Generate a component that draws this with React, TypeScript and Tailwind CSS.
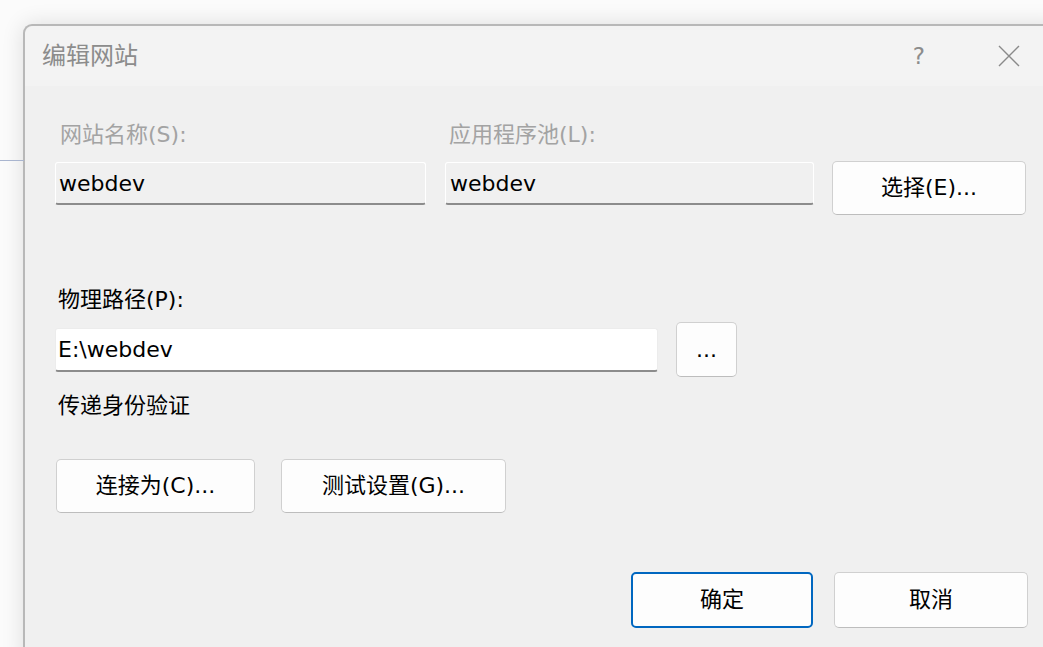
import React from "react";

const font = { fontFamily: '"DejaVu Sans", "Noto Sans CJK SC", sans-serif' };

const Btn = ({ label, w, h, primary = false }: { label: string; w: string; h: string; primary?: boolean }) => (
  <button
    className={
      "flex items-center justify-center rounded-[5px] bg-[#fdfdfd] text-[22px] leading-none text-black " +
      w + " " + h + " " +
      (primary ? "border-2 border-[#0067c0]" : "border border-[#d0d0d0] border-b-[#bdbdbd]")
    }
  >
    {label}
  </button>
);

export default function App() {
  return (
    <div className="relative h-[647px] w-[1043px] overflow-hidden bg-[#fbfbfb]" style={font}>
      {/* bit of the window behind the dialog */}
      <div className="absolute left-0 top-[160px] h-[1px] w-[24px] bg-[#a9b5cf]" />
      <div className="ml-[23px] mt-[24px] h-[640px] w-[1040px] rounded-tl-[9px] border-l-2 border-t-2 border-[#b8b8b8] bg-[#f0f0f0] shadow-[0_0_22px_rgba(0,0,0,0.12)]">
        {/* title bar */}
        <div className="flex h-[60px] items-center rounded-tl-[9px] bg-[#f3f3f3] pl-[17px]">
          <span className="text-[24px] leading-none text-[#8c8c8c]">编辑网站</span>
          <span className="ml-auto mr-[73px] text-[23px] leading-none text-[#8c8c8c]">?</span>
          <svg width="22" height="22" viewBox="0 0 22 22" className="mr-[43px]">
            <path d="M1 1 L21 21 M21 1 L1 21" stroke="#8a8a8a" strokeWidth="1.4" />
          </svg>
        </div>

        <div className="flex flex-col pl-[30px]">
          {/* name + pool */}
          <div className="mt-[34px] flex">
            <div className="flex flex-col">
              <span className="pl-[5px] text-[22px] leading-[30px] text-[#a3a3a3]">网站名称(S):</span>
              <div className="mt-[12px] flex h-[43px] w-[371px] items-center rounded-[3px] border border-white border-b-2 border-b-[#8c8c8c] bg-[#f0f0f0] pl-[3px] text-[22px] text-black">
                webdev
              </div>
            </div>
            <div className="ml-[19px] flex flex-col">
              <span className="pl-[4px] text-[22px] leading-[30px] text-[#a3a3a3]">应用程序池(L):</span>
              <div className="mt-[12px] flex h-[43px] w-[369px] items-center rounded-[3px] border border-white border-b-2 border-b-[#8c8c8c] bg-[#f0f0f0] pl-[4px] text-[22px] text-black">
                webdev
              </div>
            </div>
            <div className="ml-[18px] mt-[41px]">
              <Btn label="选择(E)..." w="w-[194px]" h="h-[54px]" />
            </div>
          </div>

          {/* physical path */}
          <span className="mt-[70px] pl-[3px] text-[22px] leading-[30px] text-black">物理路径(P):</span>
          <div className="mt-[7px] flex items-center">
            <div className="flex h-[44px] w-[603px] items-center rounded-[3px] border border-[#ececec] border-b-2 border-b-[#8c8c8c] bg-white pl-[2px] text-[22px] text-black">
              E:\webdev
            </div>
            <div className="ml-[18px]">
              <Btn label="..." w="w-[61px]" h="h-[55px]" />
            </div>
          </div>

          <span className="mt-[14px] pl-[3px] text-[22px] leading-[30px] text-black">传递身份验证</span>

          <div className="mt-[38px] flex gap-[26px] pl-[1px]">
            <Btn label="连接为(C)..." w="w-[199px]" h="h-[54px]" />
            <Btn label="测试设置(G)..." w="w-[225px]" h="h-[54px]" />
          </div>

          <div className="mt-[59px] flex gap-[21px] pl-[576px]">
            <Btn label="确定" w="w-[182px]" h="h-[56px]" primary />
            <Btn label="取消" w="w-[194px]" h="h-[56px]" />
          </div>
        </div>
      </div>
    </div>
  );
}
